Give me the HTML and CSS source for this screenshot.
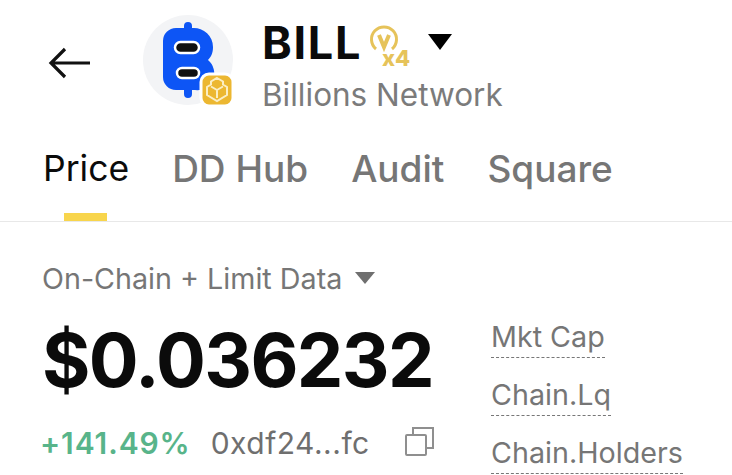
FILE: index.html
```html
<!DOCTYPE html>
<html lang="en">
  <head>
    <meta charset="UTF-8" />
    <title>BILL</title>
    <link rel="stylesheet" href="styles.css">
  </head>

  <body>
    <div class="container">
      <div class="header">
        <svg class="back" width="44" height="34" viewBox="0 0 44 34">
          <path d="M42 17H3M17 3L3 17l14 14" fill="none" stroke="#111" stroke-width="3.2" />
        </svg>
        <div class="logo">
          <svg width="94" height="94" viewBox="0 0 94 94">
            <circle cx="45" cy="45" r="45" fill="#f3f4f6" />
            <path d="M33 13h8v-2a4 4 0 0 1 8 0v2h1a19 19 0 0 1 20 19c0 6-2 10-5 13a17 17 0 0 1-13 30h-3v4a4 4 0 0 1-8 0v-4h-8a13 13 0 0 1-13-13V26a13 13 0 0 1 13-13z" fill="#0d55f5" />
            <rect x="32" y="27" width="24" height="11" rx="5.500" fill="#111" stroke="#fff" stroke-width="2.500" />
            <rect x="34" y="53" width="22" height="10" rx="5" fill="#111" stroke="#fff" stroke-width="2.500" />
            <rect x="58" y="59" width="32" height="32" rx="8" fill="#ecb731" stroke="#fff" stroke-width="3" />
            <path d="M74 63l6 3.500v3l4 2.500v8l-10 6-10-6v-8l4-2.500v-3zM74 75l-6-3.500M74 75l6-3.500M74 75v8" fill="none" stroke="#fbeec4" stroke-width="2" />
          </svg>
        </div>
        <div class="title">
          <div class="titleRow">
            <span class="symbol">BILL</span>
            <svg class="badge" width="46" height="46" viewBox="0 0 46 46">
              <path d="M10 25a12.500 12.500 0 1 1 16 0" fill="none" stroke="#e6c35a" stroke-width="3" />
              <path d="M13 11l5 12 5-12" fill="none" stroke="#e6c35a" stroke-width="4" />
              <text x="16" y="42" class="badgeText">x4</text>
            </svg>
            <svg class="caret" width="26" height="16" viewBox="0 0 26 16">
              <path d="M1 0h24L13 16z" fill="#000" />
            </svg>
          </div>
          <p class="name">Billions Network</p>
        </div>
      </div>

      <div class="tabs">
        <div class="tab active">Price</div>
        <div class="tab">DD Hub</div>
        <div class="tab">Audit</div>
        <div class="tab">Square</div>
      </div>

      <div class="main">
        <div class="left">
          <div class="source">
            <span>On-Chain + Limit Data</span>
            <svg width="20" height="12" viewBox="0 0 20 12"><path d="M0 0h20L10 12z" fill="#6f6f6f" /></svg>
          </div>
          <div class="price">$0.036232</div>
          <div class="info">
            <span class="change">+141.49%</span>
            <span class="address">0xdf24...fc</span>
            <svg width="29" height="29" viewBox="0 0 29 29">
              <path d="M8 7V1h20v20h-6" fill="none" stroke="#8f8f8f" stroke-width="2" />
              <rect x="1" y="8" width="20" height="20" rx="1" fill="none" stroke="#8f8f8f" stroke-width="2" />
            </svg>
          </div>
        </div>
        <div class="stats">
          <span class="stat">Mkt Cap</span>
          <span class="stat">Chain.Lq</span>
          <span class="stat">Chain.Holders</span>
        </div>
      </div>
    </div>
  </body>
</html>
```

FILE: styles.css
```css
* {
  margin: 0px;
  padding: 0px;
  box-sizing: border-box;
}
html,
body {
  height: 100%;
  overflow: hidden;
  background-color: #fff;
}
.container {
  width: 732px;
  height: 475px;
  overflow: hidden;
  font-family: "Inter", "Liberation Sans", sans-serif;
}
.header {
  display: flex;
  align-items: flex-start;
  height: 125px;
  padding: 15px 0 0 48px;
}
.back {
  margin-top: 31px;
}
.logo {
  margin-left: 51px;
  width: 94px;
  height: 94px;
}
.title {
  margin-left: 25px;
}
.titleRow {
  display: flex;
  align-items: center;
  height: 54px;
}
.symbol {
  font-size: 45px;
  font-weight: 700;
  letter-spacing: 1.7px;
  color: #0b0b0b;
}
.badge {
  margin-left: 4px;
  margin-top: 10px;
}
.badgeText {
  font-family: "Inter", sans-serif;
  font-size: 22px;
  font-weight: 800;
  fill: #e6c35a;
}
.caret {
  margin-left: 15px;
  margin-bottom: 1px;
}
.name {
  margin-top: 6px;
  font-size: 31.500px;
  color: #7b7b7b;
  line-height: 40px;
}
.tabs {
  display: flex;
  gap: 43px;
  height: 97px;
  padding-left: 43px;
  border-bottom: 1px solid #e8e8e8;
}
.tab {
  position: relative;
  height: 96px;
  padding-top: 19px;
  font-size: 37px;
  font-weight: 500;
  line-height: 50px;
  color: #767676;
}
.tab.active {
  font-size: 35.500px;
  font-weight: 400;
  color: #0b0b0b;
}
.tab.active::after {
  content: "";
  position: absolute;
  left: 21px;
  bottom: 0;
  width: 43px;
  height: 8px;
  background-color: #f8d54c;
}
.main {
  display: flex;
  padding: 40px 0 0 42px;
}
.left {
  width: 449px;
}
.source {
  display: flex;
  align-items: center;
  gap: 13px;
  height: 32px;
  font-size: 28.700px;
  color: #767676;
}
.price {
  margin-top: 18px;
  font-size: 74px;
  line-height: 96px;
  font-weight: 700;
  letter-spacing: -1.600px;
  color: #0b0b0b;
}
.info {
  display: flex;
  align-items: center;
  margin-top: 17px;
  margin-left: -2px;
  font-size: 30px;
  font-weight: 600;
  letter-spacing: 0.900px;
}
.change {
  color: #58b48a;
}
.address {
  margin-left: 20px;
  color: #6f6f6f;
  font-weight: 400;
  letter-spacing: 0.500px;
}
.info svg {
  margin-left: 35px;
  margin-bottom: 4px;
}
.stats {
  display: flex;
  flex-direction: column;
  align-items: flex-start;
  gap: 19px;
  padding-top: 57px;
}
.stat {
  font-size: 28.700px;
  line-height: 35px;
  padding-bottom: 3px;
  color: #767676;
  border-bottom: 1px dashed #777;
}
```
